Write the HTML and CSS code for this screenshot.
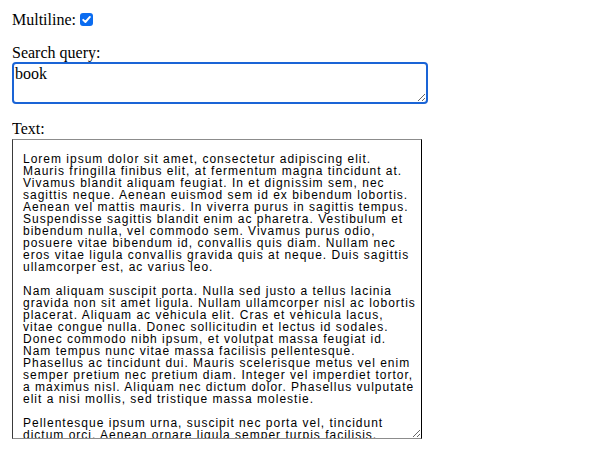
FILE: index.html
```html
<!DOCTYPE html>
<html>
<head>
<meta charset="utf-8">
<link rel="stylesheet" href="styles.css">
</head>
<body>
<div class="row first">
  <label class="check-label">Multiline: <span class="checkbox"><svg viewBox="0 0 13 13" width="13" height="13"><path d="M3.2 6.8 L5.4 9 L9.9 3.9" fill="none" stroke="#fff" stroke-width="1.9" stroke-linecap="round" stroke-linejoin="round"/></svg></span></label>
</div>
<div class="row">
  <label class="field-label" for="q">Search query:</label>
  <textarea id="q" class="query" rows="2">book</textarea>
</div>
<div class="row">
  <div class="field-label">Text:</div>
  <div class="text-box">
    <p>Lorem ipsum dolor sit amet, consectetur adipiscing elit. Mauris fringilla finibus elit, at fermentum magna tincidunt at. Vivamus blandit aliquam feugiat. In et dignissim sem, nec sagittis neque. Aenean euismod sem id ex bibendum lobortis. Aenean vel mattis mauris. In viverra purus in sagittis tempus. Suspendisse sagittis blandit enim ac pharetra. Vestibulum et bibendum nulla, vel commodo sem. Vivamus purus odio, posuere vitae bibendum id, convallis quis diam. Nullam nec eros vitae ligula convallis gravida quis at neque. Duis sagittis ullamcorper est, ac varius leo.</p>
    <p>Nam aliquam suscipit porta. Nulla sed justo a tellus lacinia gravida non sit amet ligula. Nullam ullamcorper nisl ac lobortis placerat. Aliquam ac vehicula elit. Cras et vehicula lacus, vitae congue nulla. Donec sollicitudin et lectus id sodales. Donec commodo nibh ipsum, et volutpat massa feugiat id. Nam tempus nunc vitae massa facilisis pellentesque. Phasellus ac tincidunt dui. Mauris scelerisque metus vel enim semper pretium nec pretium diam. Integer vel imperdiet tortor, a maximus nisl. Aliquam nec dictum dolor. Phasellus vulputate elit a nisi mollis, sed tristique massa molestie.</p>
    <p>Pellentesque ipsum urna, suscipit nec porta vel, tincidunt dictum orci. Aenean ornare ligula semper turpis facilisis, consectetur tempor arcu dignissim. Sed at tortor vel nunc tempor fringilla. Curabitur eget sem nec magna dapibus aliquet.</p>
  </div>
</div>
</body>
</html>
```
FILE: styles.css
```css
html, body {
  background: #fff;
}
body {
  margin: 8px 12px;
  font-family: "Liberation Serif", "Times New Roman", serif;
  font-size: 16px;
  line-height: 18px;
  color: #000;
}
.row {
  margin: 0 0 16px;
}
.row.first {
  margin-top: 3px;
  margin-bottom: 15px;
}
.check-label {
  display: inline-flex;
  align-items: center;
  gap: 4px;
}
.checkbox {
  display: inline-block;
  width: 13px;
  height: 13px;
  background: #0b6cf0;
  border-radius: 3px;
  margin-top: -2px;
}
.checkbox svg {
  display: block;
}
.field-label {
  display: block;
}
.query {
  display: block;
  box-sizing: border-box;
  width: 416px;
  height: 42px;
  margin: 0;
  padding: 1px 1px;
  border: 2px solid #1a64d6;
  border-radius: 4px;
  outline: none;
  font-family: "Liberation Serif", "Times New Roman", serif;
  font-size: 16px;
  line-height: 18px;
  color: #000;
  background: #fff;
  resize: both;
}
.text-box {
  box-sizing: border-box;
  width: 410px;
  height: 300px;
  margin-top: 1px;
  padding: 13px 4px 12px 10px;
  border-top: 1px solid #8c8c8c;
  border-bottom: 1px solid #8c8c8c;
  border-left: 1px solid #3a3a3a;
  border-right: 1px solid #000;
  overflow: hidden;
  resize: both;
  font-family: "Liberation Sans", Arial, sans-serif;
  font-size: 12px;
  line-height: 12px;
  letter-spacing: 1px;
  color: #000;
}
.text-box p {
  margin: 0 0 12px;
}
```
